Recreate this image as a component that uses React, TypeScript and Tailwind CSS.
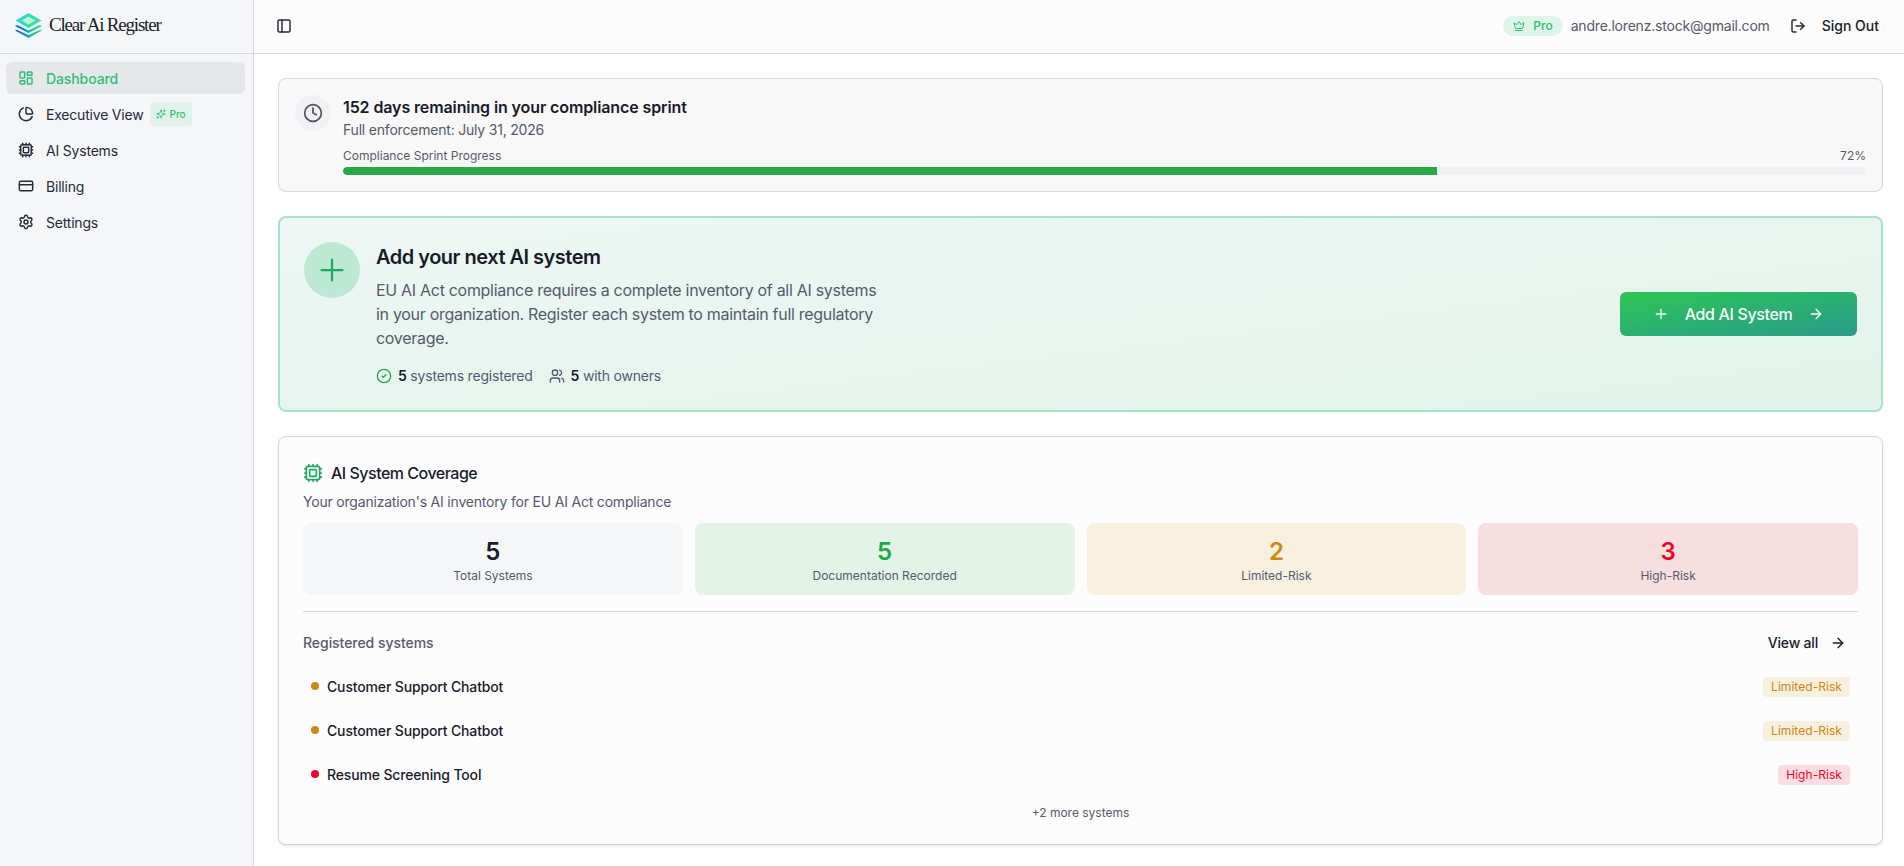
import { LayoutDashboard, ChartPie, Cpu, CreditCard, Settings, Clock, Plus, CircleCheck, Users, ArrowRight, Crown, LogOut, PanelLeft, Sparkles } from "lucide-react";

const Logo = () => (
  <svg width="27" height="25" viewBox="0 0 27 25" className="shrink-0">
    <defs>
      <linearGradient id="lg1" x1="0" y1="0" x2="1" y2="1">
        <stop offset="0" stopColor="#22d3ee" />
        <stop offset="1" stopColor="#4ade80" />
      </linearGradient>
      <linearGradient id="lg2" x1="0" y1="0" x2="1" y2="0">
        <stop offset="0" stopColor="#1d4ed8" />
        <stop offset="0.55" stopColor="#14b8a6" />
        <stop offset="1" stopColor="#34d399" />
      </linearGradient>
    </defs>
    <path d="M13.5 11.5 L27 17.5 L13.5 25 L0 17.5 Z" fill="url(#lg2)" />
    <path d="M13.5 10 L27 16 L13.5 22 L0 16 Z" fill="#e8f6f0" />
    <path d="M13.5 7 L27 13 L13.5 20 L0 13 Z" fill="url(#lg2)" />
    <path d="M13.5 5.5 L27 11 L13.5 17.5 L0 11 Z" fill="#e8f6f0" />
    <path d="M13.5 0 L26.5 7.5 L13.5 15 L0.5 7.5 Z" fill="url(#lg1)" />
    <path d="M13.5 3.5 L20.5 7.5 L13.5 11.5 L6.5 7.5 Z" fill="#b8f5d8" />
  </svg>
);

const nav = [
  { label: "Dashboard", icon: LayoutDashboard, active: true },
  { label: "Executive View", icon: ChartPie, pro: true },
  { label: "AI Systems", icon: Cpu },
  { label: "Billing", icon: CreditCard },
  { label: "Settings", icon: Settings },
];

const stats = [
  { value: "5", label: "Total Systems", box: "bg-[#f5f6f8]", text: "text-[#181b2a]" },
  { value: "5", label: "Documentation Recorded", box: "bg-[#e3f3e8]", text: "text-[#22a745]" },
  { value: "2", label: "Limited-Risk", box: "bg-[#f7f0de]", text: "text-[#d08714]" },
  { value: "3", label: "High-Risk", box: "bg-[#f7dfe0]", text: "text-[#e6092c]" },
];

const systems = [
  { name: "Customer Support Chatbot", risk: "Limited-Risk", dot: "bg-[#d08714]", badge: "bg-[#f7f0de] text-[#d08714]" },
  { name: "Customer Support Chatbot", risk: "Limited-Risk", dot: "bg-[#d08714]", badge: "bg-[#f7f0de] text-[#d08714]" },
  { name: "Resume Screening Tool", risk: "High-Risk", dot: "bg-[#e6092c]", badge: "bg-[#f9dde0] text-[#e6092c]" },
];

export default function App() {
  return (
    <div className="flex h-[866px] w-full overflow-hidden bg-white text-[#181b2a] font-['Inter',sans-serif]">
      <aside className="flex w-[254px] shrink-0 flex-col border-r border-[#d5d6de] bg-[#f5f6f8]">
        <div className="flex h-[54px] shrink-0 items-center gap-[7px] border-b border-[#d5d6de] pb-[2px] pl-[15px]">
          <Logo />
          <span className="font-['Liberation_Serif',serif] text-[19px] tracking-[-1.2px] text-[#1c1f2b]">Clear Ai Register</span>
        </div>
        <nav className="flex flex-col gap-[4px] pl-[6px] pr-[8px] pt-[8px]">
          {nav.map((n) => (
            <div key={n.label} className={`flex h-[32px] items-center gap-[12px] rounded-md px-[12px] text-sm ${n.active ? "bg-[#e6e7ea] text-[#2fbf71] font-medium tracking-[-0.1px]" : "text-[#262a3a] tracking-[-0.2px]"}`}>
              <n.icon size={16} strokeWidth={2.2} className="shrink-0" />
              <span className="pt-[2px]">{n.label}</span>
              {n.pro && (
                <span className="-ml-[5px] flex h-[24px] items-center gap-[3px] rounded-[4px] bg-[#e0f2ea] px-[6px] text-[10px] font-medium tracking-normal text-[#2fbf71]">
                  <Sparkles size={10} />
                  Pro
                </span>
              )}
            </div>
          ))}
        </nav>
      </aside>

      <div className="flex min-w-0 flex-1 flex-col">
        <header className="flex h-[54px] shrink-0 items-center border-b border-[#d5d6de] bg-[#fcfcfd] pb-[1px] pl-[22px] pr-[25px]">
          <PanelLeft size={16} strokeWidth={2.2} className="text-[#262a3a]" />
          <div className="ml-auto flex items-center">
            <span className="flex h-[20px] items-center gap-[8px] rounded-full bg-[#e0f5ea] px-[10px] text-xs font-medium text-[#2fbf71]">
              <Crown size={12} />
              Pro
            </span>
            <span className="ml-[8px] text-sm tracking-[-0.2px] text-[#555a6e]">andre.lorenz.stock@gmail.com</span>
            <LogOut size={16} strokeWidth={2.2} className="ml-[20px] text-[#262a3a]" />
            <span className="ml-[16px] text-sm font-medium text-[#181b2a]">Sign Out</span>
          </div>
        </header>

        <main className="flex flex-col gap-[24px] pl-[24px] pr-[21px] pt-[24px]">
          <section className="flex gap-[12px] rounded-lg border border-[#d5d6de] bg-[#f8f8f9] p-[16px]">
            <div className="flex h-[36px] w-[36px] shrink-0 items-center justify-center rounded-full bg-[#f0f1f5]">
              <Clock size={20} className="text-[#4b5064]" />
            </div>
            <div className="min-w-0 flex-1">
              <h2 className="text-base font-semibold leading-[24px] tracking-[-0.11px]">152 days remaining in your compliance sprint</h2>
              <p className="mt-[1px] text-sm leading-[20px] tracking-[-0.2px] text-[#555a6e]">Full enforcement: July 31, 2026</p>
              <div className="mt-[8px] flex justify-between text-xs leading-[16px] text-[#555a6e]">
                <span>Compliance Sprint Progress</span>
                <span>72%</span>
              </div>
              <div className="mt-[3px] h-[8px] overflow-hidden rounded-full bg-[#f0f1f5]">
                <div className="h-full w-[71.8%] rounded-l-full bg-[#2aa845]" />
              </div>
            </div>
          </section>

          <section className="flex items-center justify-between rounded-lg border-2 border-[#a5e4c8] bg-gradient-to-br from-[#eef7f4] to-[#e2f3ea] p-[24px]">
            <div className="flex items-start gap-[16px]">
              <div className="flex h-[56px] w-[56px] shrink-0 items-center justify-center rounded-full bg-[#bde9d4]">
                <Plus size={36} strokeWidth={1.5} className="text-[#22a861]" />
              </div>
              <div>
                <h2 className="pt-[1px] text-xl font-semibold leading-[28px] tracking-[-0.5px] text-[#181b2a]">Add your next AI system</h2>
                <p className="mt-[7px] w-[512px] text-base leading-[24px] tracking-[-0.3px] text-[#555a6e]">EU AI Act compliance requires a complete inventory of all AI systems in your organization. Register each system to maintain full regulatory coverage.</p>
                <div className="mt-[16px] flex items-center gap-[16px] text-sm leading-[20px] tracking-[-0.2px] text-[#555a6e]">
                  <span className="flex items-center gap-[6px]">
                    <CircleCheck size={16} className="text-[#22a745]" />
                    <span><b className="font-semibold text-[#181b2a]">5</b> systems registered</span>
                  </span>
                  <span className="flex items-center gap-[6px]">
                    <Users size={16} className="text-[#555a6e]" />
                    <span><b className="font-semibold text-[#181b2a]">5</b> with owners</span>
                  </span>
                </div>
              </div>
            </div>
            <button className="flex h-[44px] w-[237px] items-center justify-center gap-[16px] rounded-md bg-gradient-to-br from-[#2fc64f] to-[#2a9a88] text-base font-medium tracking-[-0.35px] text-[#f3fbf6]">
              <Plus size={16} />
              <span>Add AI System</span>
              <ArrowRight size={16} />
            </button>
          </section>

          <section className="rounded-lg border border-[#d5d6de] bg-[#fcfcfd] px-[24px] pb-[23px] pt-[24px] shadow-sm">
            <div className="flex items-center gap-[8px]">
              <Cpu size={20} className="text-[#22a861]" />
              <h2 className="text-base font-medium leading-[24px] tracking-[-0.5px]">AI System Coverage</h2>
            </div>
            <p className="mt-[7px] text-sm leading-[20px] tracking-[-0.2px] text-[#555a6e]">Your organization's AI inventory for EU AI Act compliance</p>
            <div className="mt-[11px] grid grid-cols-4 gap-[12px]">
              {stats.map((s) => (
                <div key={s.label} className={`flex h-[72px] flex-col items-center justify-center rounded-lg pt-[2px] ${s.box}`}>
                  <span className={`text-2xl font-semibold leading-[32px] ${s.text}`}>{s.value}</span>
                  <span className="text-xs leading-[16px] text-[#555a6e]">{s.label}</span>
                </div>
              ))}
            </div>
            <div className="mt-[16px] border-t border-[#d5d6de]" />
            <div className="mt-[15px] flex h-[32px] items-center justify-between pr-[12px]">
              <span className="text-sm font-medium tracking-[-0.05px] text-[#555a6e]">Registered systems</span>
              <span className="flex items-center gap-[12px] text-sm font-medium tracking-[-0.2px] text-[#181b2a]">
                View all
                <ArrowRight size={16} />
              </span>
            </div>
            <div className="mt-[10px] flex flex-col gap-[8px]">
              {systems.map((s, i) => (
                <div key={i} className="flex h-[36px] items-center justify-between px-[8px]">
                  <span className="flex items-center gap-[8px]">
                    <span className={`mb-[2px] h-[8px] w-[8px] rounded-full ${s.dot}`} />
                    <span className="text-sm font-medium tracking-[-0.15px] text-[#181b2a]">{s.name}</span>
                  </span>
                  <span className={`flex h-[20px] items-center rounded-[4px] px-[8px] text-xs tracking-[0.05px] ${s.badge}`}>{s.risk}</span>
                </div>
              ))}
            </div>
            <p className="mt-[12px] text-center text-xs leading-[16px] text-[#555a6e]">+2 more systems</p>
          </section>
        </main>
      </div>
    </div>
  );
}
